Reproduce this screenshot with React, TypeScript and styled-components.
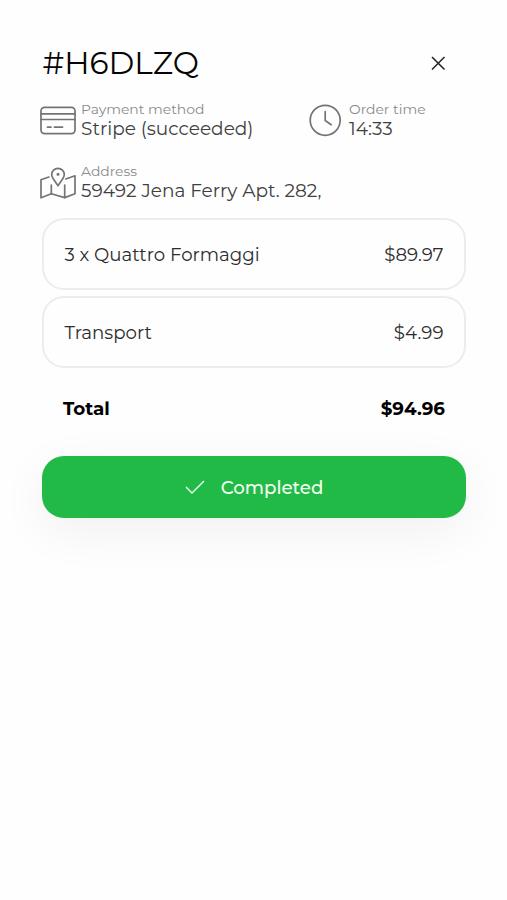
import React from 'react';
import styled, { createGlobalStyle } from 'styled-components';

const GlobalStyle = createGlobalStyle`
  * { box-sizing: border-box; }
  body { margin: 0; background: #fefefe; font-family: Montserrat, Inter, "Liberation Sans", sans-serif; }
`;

const Page = styled.main`
  width: 507px;
  min-height: 900px;
  padding: 39px 42px 0;
  overflow: hidden;
`;

const Header = styled.header`
  display: flex;
  align-items: center;
  justify-content: space-between;
  height: 48px;
  padding-right: 19px;
`;

const Title = styled.h1`
  margin: 0;
  padding-left: 0.5px;
  font-size: 31.2px;
  font-weight: 400;
  line-height: 48px;
  color: #050505;
`;

const CloseButton = styled.button`
  display: flex;
  padding: 0;
  border: 0;
  background: none;
  color: #222;
`;

const Details = styled.section`
  display: grid;
  grid-template-columns: 268px 1fr;
  row-gap: 22px;
  margin: 13px 0 0 -3px;
`;

const Detail = styled.div<{ $wide?: boolean }>`
  display: flex;
  align-items: center;
  height: 40px;
  grid-column: ${({ $wide }) => ($wide ? '1 / -1' : 'auto')};
`;

const DetailText = styled.div`
  white-space: nowrap;
`;

const DetailIcon = styled.svg`
  flex: none;
  width: 38px;
  height: 38px;
  margin-right: 4px;
  fill: none;
  stroke: #747474;
  stroke-width: 1.7;
  stroke-linejoin: round;
  stroke-linecap: round;
`;

const Label = styled.div`
  font-size: 13.9px;
  line-height: 17px;
  color: #8a8a8a;
`;

const Value = styled.div`
  font-size: 18.5px;
  line-height: 21px;
  color: #404040;
`;

const Lines = styled.section`
  display: grid;
  gap: 6px;
  margin-top: 16px;
`;

const Line = styled.div`
  display: flex;
  align-items: center;
  justify-content: space-between;
  height: 72px;
  width: 424px;
  padding: 0 20.5px;
  border: 2px solid #ececec;
  border-radius: 22px;
  color: #2c2c2c;
  font-size: 18.2px;
`;

const TotalRow = styled.div`
  display: flex;
  align-items: center;
  justify-content: space-between;
  height: 40px;
  margin-top: 20px;
  padding: 0 20px 0 21px;
  font-size: 18.3px;
  font-weight: 700;
  color: #000;
`;

const StatusButton = styled.button`
  display: flex;
  align-items: center;
  justify-content: center;
  gap: 16px;
  width: 424px;
  height: 62px;
  margin-top: 28px;
  padding: 0;
  border: 0;
  border-radius: 22px;
  background: #22ba46;
  color: #f2fff4;
  font: 500 18.2px Montserrat, Inter, sans-serif;
  box-shadow: 0 13px 50px rgba(0, 0, 0, 0.06);
`;

function CardIcon() {
  return (
    <DetailIcon viewBox="0 0 38 38">
      <rect x="2" y="6.4" width="34" height="26.2" rx="3.6" />
      <path d="M2 12.9h34M2 18.5h34" />
      <path d="M8.5 26.2h3.5M15.5 26.2h8" />
    </DetailIcon>
  );
}

function ClockIcon() {
  return (
    <DetailIcon viewBox="0 0 38 38">
      <circle cx="18.2" cy="19.3" r="15" />
      <path d="M18.2 10.5v9l6 4.2" />
    </DetailIcon>
  );
}

function MapIcon() {
  return (
    <DetailIcon viewBox="0 0 38 38">
      <path d="M9.8 14 2 16.8v18l10.3-4.1 13.4 3.9L36 30.8v-18L26.8 16" />
      <path d="M12.3 22v8.7M25.7 22v12.6" />
      <path d="M19 22.8c-2-3.5-6.3-7.6-6.3-11.2a6.3 6.3 0 0 1 12.6 0c0 3.6-4.3 7.7-6.3 11.2Z" />
      <circle cx="19" cy="11.2" r=".7" />
    </DetailIcon>
  );
}

export default function App() {
  return (
    <>
      <GlobalStyle />
      <Page>
        <Header>
          <Title>#H6DLZQ</Title>
          <CloseButton aria-label="Close">
            <svg width="16" height="16" viewBox="0 0 16 16" fill="none" stroke="currentColor" strokeWidth="1.5">
              <path d="m2 2 12.5 12.5M14.5 2 2 14.5" />
            </svg>
          </CloseButton>
        </Header>
        <Details>
          <Detail>
            <CardIcon />
            <DetailText>
              <Label>Payment method</Label>
              <Value>Stripe (succeeded)</Value>
            </DetailText>
          </Detail>
          <Detail>
            <ClockIcon />
            <DetailText>
              <Label>Order time</Label>
              <Value>14:33</Value>
            </DetailText>
          </Detail>
          <Detail $wide>
            <MapIcon />
            <DetailText>
              <Label>Address</Label>
              <Value>59492 Jena Ferry Apt. 282,</Value>
            </DetailText>
          </Detail>
        </Details>
        <Lines>
          <Line>
            <span>3 x Quattro Formaggi</span>
            <span>$89.97</span>
          </Line>
          <Line>
            <span>Transport</span>
            <span>$4.99</span>
          </Line>
        </Lines>
        <TotalRow>
          <span>Total</span>
          <span>$94.96</span>
        </TotalRow>
        <StatusButton>
          <svg width="20" height="16" viewBox="0 0 20 16" fill="none" stroke="currentColor" strokeWidth="1.4">
            <path d="m1 8 6 6L19 2" />
          </svg>
          <span>Completed</span>
        </StatusButton>
      </Page>
    </>
  );
}
